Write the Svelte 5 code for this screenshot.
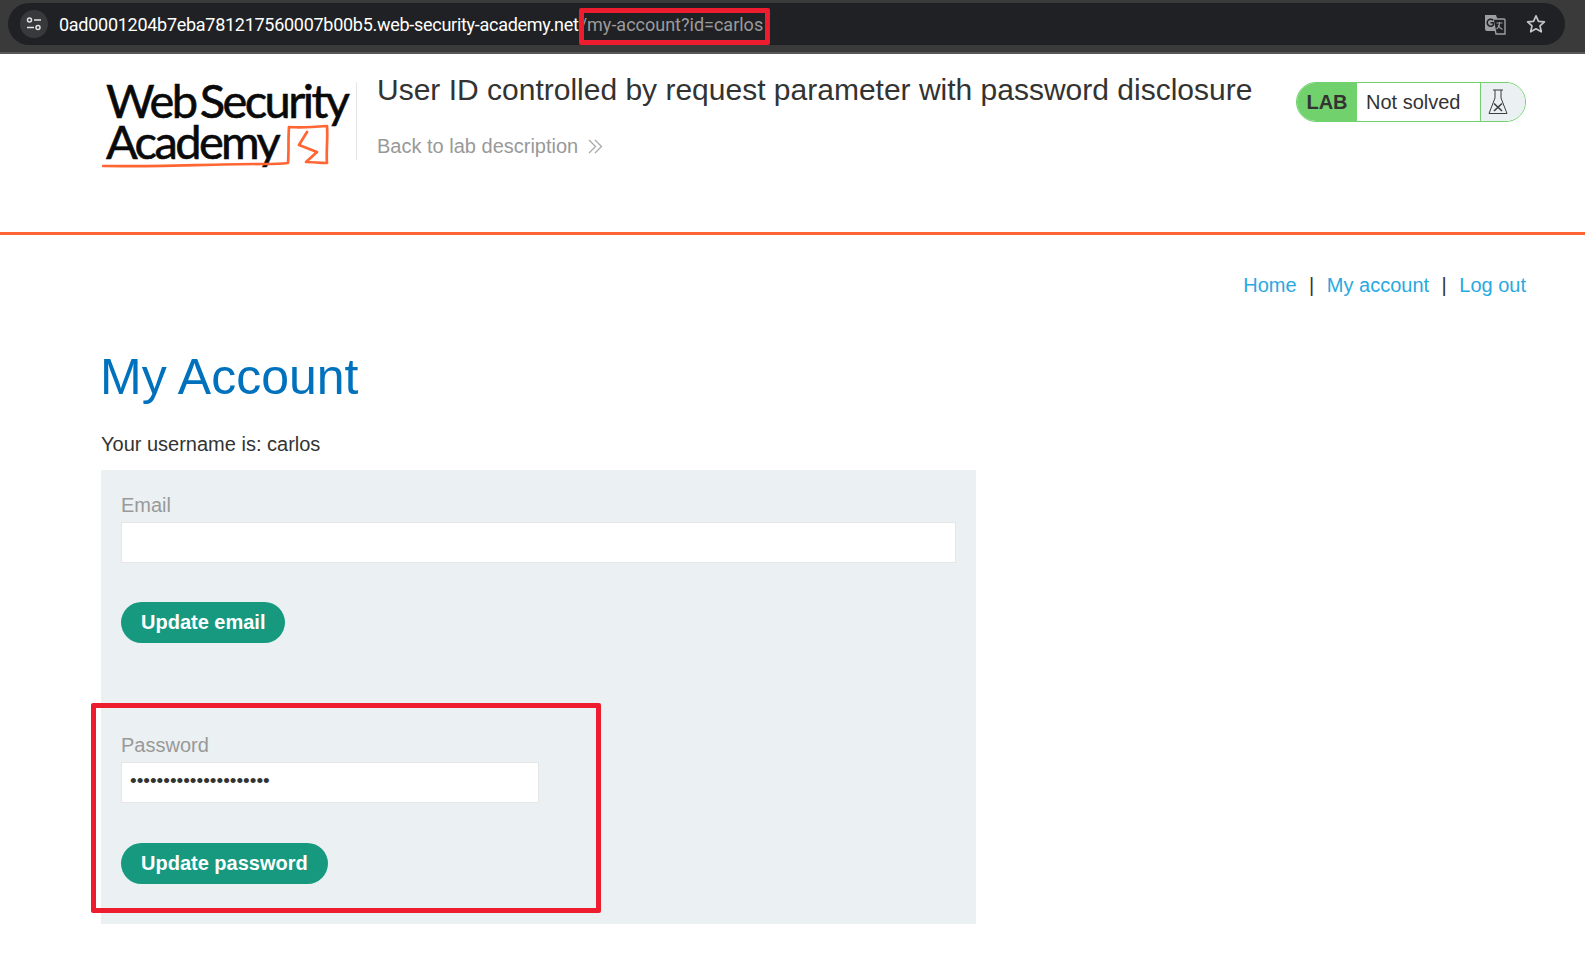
<script>
    const dots = '•'.repeat(21);
</script>

<div class="browser">
    <div class="omnibox">
        <span class="tune">
            <svg width="18" height="18" viewBox="0 0 18 18" fill="none" stroke="#e3e3e5" stroke-width="1.5">
                <circle cx="4.5" cy="5" r="2" />
                <path d="M9 5h7M2 12.5h7" />
                <circle cx="13" cy="12.5" r="2" />
            </svg>
        </span>
        <span class="url">0ad0001204b7eba781217560007b00b5.web-security-academy.net<span class="path">/my-account?id=carlos</span></span>
        <span class="actions">
            <svg width="24" height="24" viewBox="0 0 24 24">
                <path d="M2 3h11l1 3v13H4a2 2 0 0 1-2-2z" fill="#9d9ea0" />
                <path d="M10 7h11a1 1 0 0 1 1 1v14H13l-3-15z" fill="#202124" stroke="#9d9ea0" stroke-width="1.4" />
                <path d="M10.2 8.2a3.5 3.5 0 1 0 .3 4.6v-2H7.5" fill="none" stroke="#202124" stroke-width="1.5" />
                <path d="M13.5 11h6M16.5 10v1c0 3-1.3 5-3 6M15 13c1 2 2.500 3.500 4.500 4.500" fill="none" stroke="#9d9ea0" stroke-width="1.1" />
            </svg>
            <svg width="22" height="22" viewBox="0 0 22 22" fill="none" stroke="#c4c5c7" stroke-width="1.7" stroke-linejoin="round">
                <path d="M11 2.800l2.500 5.500 5.900.6-4.400 4 1.300 5.900-5.300-3-5.300 3 1.300-5.900-4.400-4 5.900-.6z" />
            </svg>
        </span>
    </div>
</div>

<header>
    <div class="logo">
        <div class="logo-text first">Web Security</div>
        <div class="logo-text">Academy</div>
        <svg class="logo-mark" width="232" height="50" viewBox="0 0 232 50" fill="none" stroke="#ff6633" stroke-linecap="round" stroke-linejoin="round">
            <path d="M1 47c50 1 110-2 160-2 9 0 17 0 25-1 1-12 0-24 1-36 12 1 26 0 38-1 1 12-1 25 0 37-7 0-14-1-21-1l11-10-18-7 8-13" stroke-width="2.700" />
        </svg>
    </div>
    <div class="title-block">
        <h2>User ID controlled by request parameter with password disclosure</h2>
        <a class="back" href="#back">Back to lab description
            <svg width="17" height="17" viewBox="0 0 17 17" fill="none" stroke="#a9a9a9" stroke-width="1.300">
                <path d="M2 2l6.500 6.500L2 15M8 2l6.500 6.500L8 15" />
            </svg>
        </a>
    </div>
    <div class="status">
        <span class="lab">LAB</span>
        <span class="state">Not solved</span>
        <span class="flask">
            <svg width="20" height="26" viewBox="0 0 20 26" fill="none" stroke="#3d3d3d" stroke-width="1">
                <path d="M5 1h10M7 1v8L1 24.500h18L13 9V1" />
                <path d="M6 14.500l8 7.500M14 14.500l-8 7.500" stroke-width="1.600" />
            </svg>
        </span>
    </div>
</header>

<main>
    <nav>
        <a href="#home">Home</a><span>|</span><a href="#account">My account</a><span>|</span><a href="#logout">Log out</a>
    </nav>
    <h1>My Account</h1>
    <p class="username">Your username is: carlos</p>
    <div class="panel">
        <form class="email-form">
            <label for="email">Email</label>
            <input id="email" type="text" />
            <button type="button">Update email</button>
        </form>
        <form class="password-form">
            <label for="password">Password</label>
            <input id="password" type="text" value={dots} />
            <button type="button">Update password</button>
        </form>
    </div>
</main>

<div class="mark mark-url"></div>
<div class="mark mark-form"></div>

<style>
    :global(body) {
        background: #fff;
        color: #333332;
        font-family: "Liberation Sans", Arial, sans-serif;
    }
    a {
        text-decoration: none;
    }
    .browser {
        height: 54px;
        padding-top: 3px;
        box-sizing: border-box;
        background: #3a3a3a;
        border-bottom: 2px solid #58585a;
    }
    .omnibox {
        display: flex;
        align-items: center;
        height: 42px;
        margin: 0 20px 0 8px;
        padding: 0 18px 0 12px;
        border-radius: 21px;
        background: #202124;
    }
    .tune {
        display: flex;
        align-items: center;
        justify-content: center;
        width: 28px;
        height: 28px;
        border-radius: 50%;
        background: #38393b;
    }
    .url {
        margin-left: 11px;
        color: #fff;
        font-family: Roboto, sans-serif;
        font-size: 18px;
        letter-spacing: -0.28px;
    }
    .path {
        margin-left: 1px;
        color: #9a9b9d;
        letter-spacing: 0;
    }
    .actions {
        display: flex;
        align-items: center;
        gap: 18px;
        margin-left: auto;
    }
    header {
        display: flex;
        height: 181px;
        box-sizing: border-box;
        padding: 18px 59px 0 101px;
        border-bottom: 3px solid #ff6633;
    }
    .logo {
        position: relative;
        width: 256px;
        height: 78px;
        margin-top: 10px;
        box-sizing: border-box;
        border-right: 1px solid #e6e6e6;
        flex: none;
    }
    .logo-text {
        color: #0a0a0a;
        font-family: Lato, sans-serif;
        font-size: 47px;
        line-height: 41px;
        letter-spacing: -2.600px;
        word-spacing: -5px;
        margin-left: 5px;
        white-space: nowrap;
        -webkit-text-stroke: 0.6px #0a0a0a;
    }
    .logo-text.first {
        margin-top: -2px;
    }
    .logo-mark {
        position: absolute;
        left: 1px;
        top: 37px;
    }
    .title-block {
        margin-left: 20px;
    }
    h2 {
        margin: 0;
        font-size: 30px;
        font-weight: 400;
        line-height: 36px;
        white-space: nowrap;
    }
    .back {
        display: flex;
        align-items: center;
        gap: 9px;
        margin-top: 26px;
        color: #999;
        font-size: 20px;
        line-height: 24px;
    }
    .status {
        display: flex;
        align-self: flex-start;
        height: 40px;
        box-sizing: border-box;
        margin: 10px 0 0 auto;
        border: 1px solid #70d16d;
        border-radius: 20px;
        overflow: hidden;
        flex: none;
    }
    .lab {
        display: flex;
        align-items: center;
        justify-content: center;
        width: 60px;
        background: #70d16d;
        font-weight: 700;
        font-size: 20px;
    }
    .state {
        display: flex;
        align-items: center;
        width: 114px;
        padding-left: 9px;
        font-size: 20px;
    }
    .flask {
        display: flex;
        align-items: center;
        padding-left: 7px;
        width: 45px;
        box-sizing: border-box;
        border-left: 1px solid #70d16d;
        background: #ebf0f2;
    }
    main {
        padding: 0 59px 0 101px;
    }
    nav {
        display: flex;
        justify-content: flex-end;
        gap: 12.5px;
        padding-top: 38px;
        font-size: 20px;
        line-height: 24px;
    }
    nav a {
        color: #29a9e0;
    }
    h1 {
        margin: 50px 0 0 -1px;
        color: #0071bc;
        font-size: 50px;
        font-weight: 400;
        line-height: 60px;
    }
    .username {
        margin: 23px 0 0;
        font-size: 20px;
        line-height: 28px;
    }
    .panel {
        width: 875px;
        height: 454px;
        margin-top: 12px;
        padding: 18px 20px 20px;
        box-sizing: border-box;
        background: #ebf0f2;
    }
    label {
        display: block;
        color: #999;
        font-size: 20px;
        line-height: 34px;
    }
    input {
        display: block;
        height: 41px;
        box-sizing: border-box;
        padding: 0 8px;
        border: 1px solid #e6e6e6;
        background: #fff;
        color: #333332;
        font-family: "Liberation Sans", Arial, sans-serif;
        font-size: 19px;
        outline: none;
    }
    .email-form input {
        width: 835px;
    }
    .password-form {
        margin-top: 86px;
    }
    .password-form label {
        line-height: 33px;
    }
    .password-form input {
        width: 418px;
        padding-bottom: 3px;
    }
    .password-form button {
        margin-top: 40px;
    }
    button {
        display: block;
        height: 41px;
        margin-top: 39px;
        padding: 0 20px;
        border: none;
        border-radius: 21px;
        background: #16997f;
        color: #fff;
        font-family: "Liberation Sans", Arial, sans-serif;
        font-size: 20px;
        font-weight: 700;
    }
    .mark {
        position: absolute;
        box-sizing: border-box;
        border: 5px solid #ed1c2e;
        border-radius: 2px;
    }
    .mark-url {
        left: 579px;
        top: 8px;
        width: 191px;
        height: 37px;
    }
    .mark-form {
        left: 91px;
        top: 703px;
        width: 510px;
        height: 210px;
    }
</style>
